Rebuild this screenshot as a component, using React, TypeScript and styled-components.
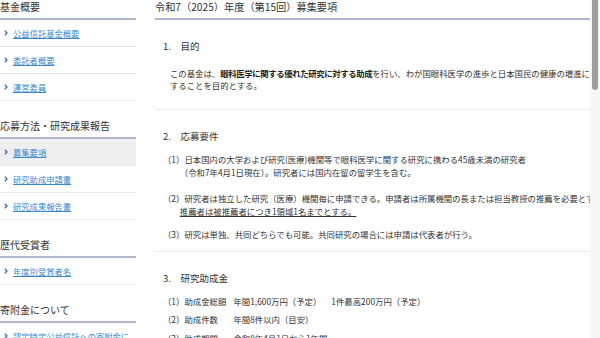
import React from "react";
import styled, { createGlobalStyle } from "styled-components";

const GlobalStyle = createGlobalStyle`
  html, body {
    margin: 0;
    padding: 0;
    background: #fff;
  }
  body {
    font-family: "Noto Sans CJK JP", "Noto Sans", sans-serif;
    color: #333;
  }
  ul, ol {
    margin: 0;
    padding: 0;
    list-style: none;
  }
`;

const Viewport = styled.div`
  position: relative;
  width: 600px;
  height: 338px;
  overflow: hidden;
  background: #fff;
`;

// drawn scrollbar, the headless browser hides the real one
const ScrollTrack = styled.div`
  position: absolute;
  top: 0;
  right: 0;
  width: 10px;
  height: 100%;
  background: #f7f7f7;
`;

const ScrollThumb = styled.div`
  width: 6px;
  height: 90px;
  margin-left: 2px;
  border-radius: 0 0 3px 3px;
  background: #9d9d9d;
`;

const Page = styled.div`
  display: flex;
  align-items: flex-start;
  gap: 19px;
  width: 640px;
`;

/* ---------- sidebar ---------- */

const Sidebar = styled.aside`
  width: 136px;
  flex: none;
`;

const NavSection = styled.section`
  & + & {
    margin-top: 18px;
  }
`;

const NavHeading = styled.h3`
  margin: 0;
  font-size: 10px;
  font-weight: normal;
  line-height: 14px;
  padding-bottom: 4px;
  border-bottom: 2px solid #b1b6cf;
  color: #333;
`;

const NavItem = styled.li<{ $active?: boolean }>`
  display: flex;
  align-items: flex-start;
  gap: 5px;
  padding: 7px 0 7px 4px;
  line-height: 12px;
  border-bottom: 1px solid #e6e6e6;
  background: ${({ $active }) => ($active ? "#efefef" : "transparent")};
`;

const Chevron = styled.svg`
  flex: none;
  margin-top: 3px;
`;

const NavLink = styled.a`
  font-size: 8.3px;
  color: #3a88cb;
  text-decoration: underline;
  cursor: pointer;
`;

/* ---------- main ---------- */

const Main = styled.main`
  width: 459px;
  flex: none;
`;

const Title = styled.h1`
  margin: 0;
  font-size: 10.2px;
  font-weight: normal;
  line-height: 14px;
  padding-bottom: 4px;
  border-bottom: 2px solid #aeb6d1;
  color: #333;
`;

const Section = styled.section<{ $pb?: number }>`
  padding: 19px 0 ${({ $pb }) => $pb ?? 10}px 8px;
  border-bottom: 1px solid #ececec;
`;

const SectionHeading = styled.h2`
  margin: 0 0 10px;
  font-size: 9.5px;
  font-weight: normal;
  line-height: 14px;
  color: #333;
`;

const Paragraph = styled.p`
  margin: 14px 0 0 7px;
  font-size: 8.4px;
  line-height: 12px;
`;

// bold glyphs come out a bit wider here, pull them back to one em each
const Strong = styled.b`
  font-weight: bold;
  color: #222;
  letter-spacing: -0.38px;
`;

const Rules = styled.ol<{ $gap: number }>`
  display: flex;
  flex-direction: column;
  gap: ${({ $gap }) => $gap}px;
`;

const Rule = styled.li<{ $after?: number }>`
  font-size: 8.4px;
  line-height: 12.5px;
  padding-left: 2em;
  text-indent: -2em;
  margin-bottom: ${({ $after }) => $after ?? 0}px;
`;

const Underlined = styled.span`
  text-decoration: underline;
`;

const Term = styled.span`
  display: inline-block;
  width: 49px;
  text-indent: 0;
`;

const Extra = styled.span`
  margin-left: 10px;
`;

const sideNav = [
  {
    heading: "基金概要",
    items: ["公益信託基金概要", "委託者概要", "運営委員"],
  },
  {
    heading: "応募方法・研究成果報告",
    items: ["募集要項", "研究助成申請書", "研究成果報告書"],
  },
  {
    heading: "歴代受賞者",
    items: ["年度別受賞者名"],
  },
  {
    heading: "寄附金について",
    items: ["認定特定公益信託への寄附金に関する税制上の取扱い", "寄附のお願い"],
  },
];

const ChevronIcon = () => (
  <Chevron width="4" height="6" viewBox="0 0 4 6">
    <polyline points="0.8,0.8 3,3 0.8,5.2" fill="none" stroke="#3b6ea8" strokeWidth="1.3" />
  </Chevron>
);

export default function App() {
  return (
    <>
      <GlobalStyle />
      <Viewport>
        <Page>
          <Sidebar>
            {sideNav.map((group) => (
              <NavSection key={group.heading}>
                <NavHeading>{group.heading}</NavHeading>
                <ul>
                  {group.items.map((item) => (
                    <NavItem key={item} $active={item === "募集要項"}>
                      <ChevronIcon />
                      <NavLink>{item}</NavLink>
                    </NavItem>
                  ))}
                </ul>
              </NavSection>
            ))}
          </Sidebar>

          <Main>
            <Title>令和7（2025）年度（第15回）募集要項</Title>

            <Section $pb={18}>
              <SectionHeading>1.　目的</SectionHeading>
              <Paragraph>
                この基金は、<Strong>眼科医学に関する優れた研究に対する助成</Strong>
                を行い、わが国眼科医学の進歩と日本国民の健康の増進に寄与することを目的とする。
              </Paragraph>
            </Section>

            <Section>
              <SectionHeading>2.　応募要件</SectionHeading>
              <Rules $gap={11}>
                <Rule $after={3}>
                  （1）日本国内の大学および研究(医療)機関等で眼科医学に関する研究に携わる45歳未満の研究者
                  <br />
                  （令和7年4月1日現在）。研究者には国内在留の留学生を含む。
                </Rule>
                <Rule>
                  （2）研究者は独立した研究（医療）機関毎に申請できる。申請者は所属機関の長または担当教授の推薦を必要とする。
                  <Underlined>推薦者は被推薦者につき1領域1名までとする。</Underlined>
                </Rule>
                <Rule>（3）研究は単独、共同どちらでも可能。共同研究の場合には申請は代表者が行う。</Rule>
              </Rules>
            </Section>

            <Section>
              <SectionHeading>3.　研究助成金</SectionHeading>
              <Rules $gap={6}>
                <Rule>
                  （1）<Term>助成金総額</Term>年間1,600万円（予定）<Extra>1件最高200万円（予定）</Extra>
                </Rule>
                <Rule>
                  （2）<Term>助成件数</Term>年間8件以内（目安）
                </Rule>
                <Rule>
                  （3）<Term>助成期間</Term>令和8年4月1日から1年間
                </Rule>
              </Rules>
            </Section>

            <Section>
              <SectionHeading>4.　応募方法</SectionHeading>
              <Rules $gap={6}>
                <Rule>（1）所定の研究助成申請書に必要事項を記入し、推薦書を添えて事務局へ郵送する。</Rule>
                <Rule>（2）応募締切　令和7年9月30日（当日消印有効）</Rule>
              </Rules>
            </Section>
          </Main>
        </Page>
        <ScrollTrack>
          <ScrollThumb />
        </ScrollTrack>
      </Viewport>
    </>
  );
}
